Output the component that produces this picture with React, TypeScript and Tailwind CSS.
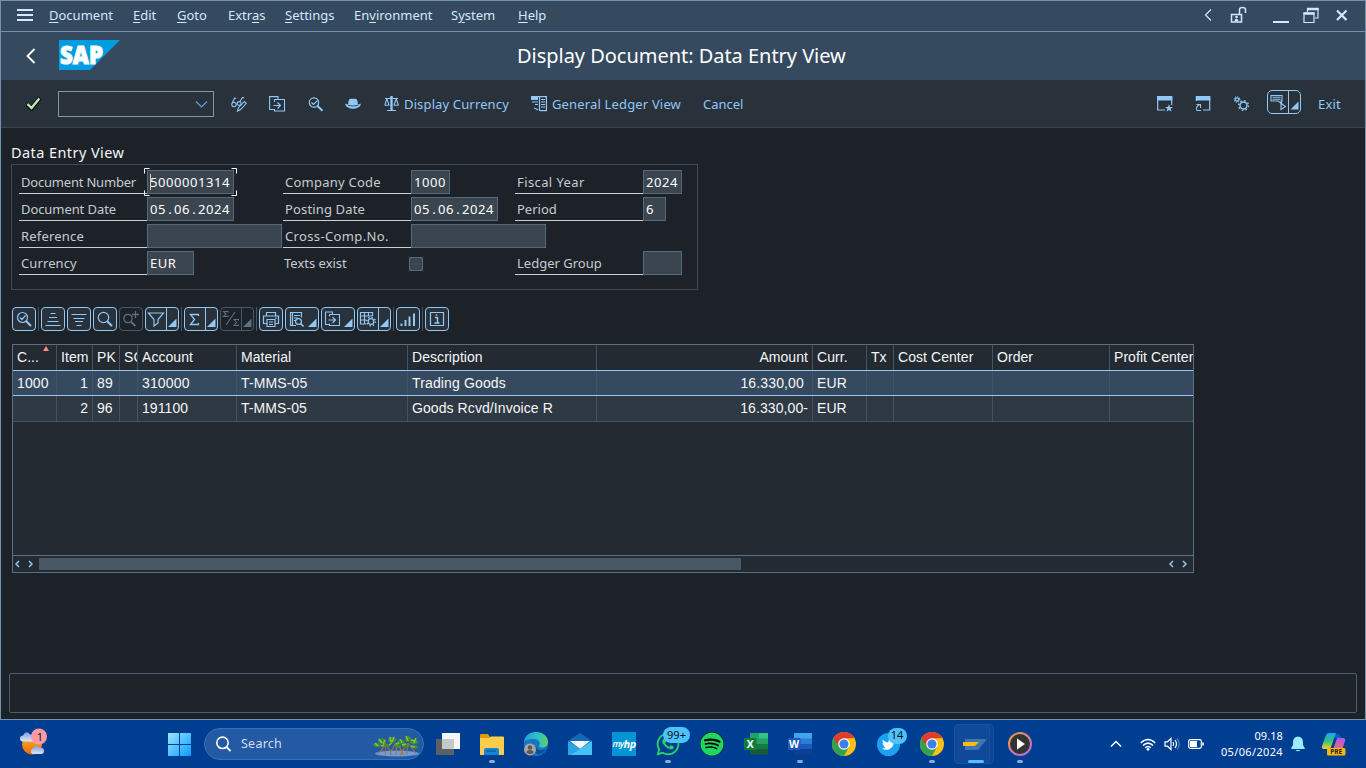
import React from 'react';
import { FaWhatsapp, FaSpotify, FaTwitter } from 'react-icons/fa';

type Kids = { children?: React.ReactNode };

function Ic({ w = 18, h = 18, className = '', children }: Kids & { w?: number; h?: number; className?: string }) {
  return (
    <svg width={w} height={h} viewBox={`0 0 ${w} ${h}`} className={`block shrink-0 ${className}`} fill="none" stroke="currentColor" strokeWidth="1.2">
      {children}
    </svg>
  );
}

/* ---------- menu bar ---------- */
function MenuItem({ pre = '', u, post, w }: { pre?: string; u: string; post: string; w: string }) {
  return (
    <span className={`${w} shrink-0 whitespace-nowrap`}>
      {pre}
      <u className="underline-offset-2">{u}</u>
      {post}
    </span>
  );
}

function MenuBar() {
  return (
    <div className="flex h-[31px] items-center border-b border-[#7292b3] bg-[#354a5f] pb-[2px] text-[13px] leading-[18px] text-[#d1e8ff]">
      <Ic w={16} h={14} className="ml-4 mr-4">
        <path d="M0 2h16M0 7h16M0 12h16" strokeWidth="2" />
      </Ic>
      <MenuItem u="D" post="ocument" w="w-[84px]" />
      <MenuItem u="E" post="dit" w="w-[44px]" />
      <MenuItem u="G" post="oto" w="w-[51px]" />
      <MenuItem pre="Extr" u="a" post="s" w="w-[57px]" />
      <MenuItem u="S" post="ettings" w="w-[69px]" />
      <MenuItem pre="En" u="v" post="ironment" w="w-[97px]" />
      <MenuItem pre="S" u="y" post="stem" w="w-[67px]" />
      <MenuItem u="H" post="elp" w="w-[60px]" />
      <div className="ml-auto flex items-center pr-[17px]">
        <Ic w={8} h={14} className="mr-[18px]">
          <path d="M7 1.500L1.500 7L7 12.500" />
        </Ic>
        <Ic w={17} h={18} className="mr-[26px]">
          <path d="M1.500 8.500h10v7.500H1.500zM9.500 8V3.500q0-2 3-2t3 2V7" strokeWidth="1.500" />
          <circle cx="6.500" cy="11" r="1.300" fill="currentColor" stroke="none" />
          <path d="M4.500 15.200q0-2.500 2-2.500t2 2.500z" fill="currentColor" stroke="none" />
        </Ic>
        <Ic w={16} h={16} className="mr-[14px]">
          <path d="M0 15h16" strokeWidth="2" />
        </Ic>
        <Ic w={16} h={17} className="mr-[17px]">
          <path d="M1 6h10v9.500H1zM4.500 5V1.500h10.500V11H12" />
          <path d="M.5 6.500h11M4 2h11.500" strokeWidth="2.600" />
        </Ic>
        <Ic w={12} h={14}>
          <path d="M1 2.500l9.500 9.500M10.500 2.500l-9.500 9.500" strokeWidth="2.200" />
        </Ic>
      </div>
    </div>
  );
}

function TitleBar() {
  return (
    <div className="flex h-12 items-center bg-[#354a5f]">
      <Ic w={10} h={16} className="ml-[25px] mr-[23px] text-white">
        <path d="M8.500 1L1.500 8L8.500 15" strokeWidth="1.800" />
      </Ic>
      <svg width="61" height="30" viewBox="0 0 61 30" className="-mt-[2px] block shrink-0 overflow-visible">
        <path d="M0 0h61L31 30H0z" fill="#009de0" />
        <text x="1" y="23.500" fontFamily="Open Sans" fontWeight="800" fontSize="25" fill="#fff" stroke="#fff" strokeWidth="1" textLength="43" lengthAdjust="spacingAndGlyphs">SAP</text>
      </svg>
      <h1 className="ml-[397px] whitespace-nowrap text-[20px] leading-7 tracking-[-0.03px] text-white">Display Document: Data Entry View</h1>
    </div>
  );
}

function ToolLabel({ children, w }: Kids & { w: string }) {
  return <span className={`${w} shrink-0 whitespace-nowrap`}>{children}</span>;
}

function MainToolbar() {
  return (
    <div className="flex h-12 items-center border-b border-[#3a4552] bg-[#29313a] text-[13px] leading-[18px] text-[#91c8f6]">
      <svg width="16" height="14" viewBox="0 0 16 14" className="ml-[25px] mr-4 block shrink-0" fill="none">
        <path d="M.8 7L5.500 11.500L14 1" stroke="#111" strokeWidth="4.400" />
        <path d="M1.500 7L5.500 11L13.300 1.500" stroke="#b6efae" strokeWidth="2.400" />
      </svg>
      <div className="mr-[17px] flex h-[26px] w-[156px] items-center justify-end border border-[#8396a8] pr-[5px]">
        <Ic w={13} h={8} className="text-[#5f9ee0]">
          <path d="M1 1.500l5.500 5.500L12 1.500" />
        </Ic>
      </div>
      <Ic w={17} h={16} className="mr-[21px]">
        <circle cx="3" cy="8.500" r="2.200" strokeWidth="1.100" />
        <circle cx="8.200" cy="7.500" r="1.900" strokeWidth="1.100" />
        <path d="M1.200 7L3.500 2l1.700.3M9 5.500l2.500-4 1.800.5" strokeWidth="1.100" />
        <path d="M6.500 15l.8-3 6-6.500 2 1.800-6 6.500z" strokeWidth="1.100" />
      </Ic>
      <Ic w={17} h={16} className="mr-[22px]">
        <path d="M5.500 13.500H.6V.6h8.400v2.400M5.500 6V3.500h10V15h-10v-2M4.500 9.500h7M8.500 6.500l3 3-3 3" strokeWidth="1.100" />
      </Ic>
      <Ic w={16} h={16} className="mr-[21px]">
        <circle cx="6" cy="6.500" r="4.700" />
        <path d="M3.500 6.500l2 2 4-4" />
        <path d="M9.500 10l5 4.800" strokeWidth="2" />
      </Ic>
      <Ic w={16} h={12} className="mr-[23px]">
        <path d="M3.200 6.500Q3 .8 6 .8h4q3 0 2.800 5.700 2.200 0 2.900-1 .3 2.500-2.700 4-5 2.500-10 0-3-1.500-2.700-4 .7 1 2.900 1z" fill="currentColor" stroke="none" />
        <path d="M3 7.300q5 1.500 10 0" stroke="#29313a" strokeWidth=".8" />
      </Ic>
      <Ic w={16} h={17} className="mr-[4px]">
        <path d="M1 3.500h5.500L7.500 2l1 1.500H14M3 15.500h9M2.800 4L.8 10M2.800 4l2.200 6M12.200 4l-2.200 6M12.200 4l2.200 6M.5 10.200h5M9.700 10.200h5" strokeWidth="1.100" />
        <path d="M7.500 1v14.500" strokeWidth="2.400" />
      </Ic>
      <span className="w-[127px] shrink-0 whitespace-nowrap tracking-[0.14px]">Display Currency</span>
      <Ic w={17} h={16} className="mr-[4px]">
        <path d="M0 0h7v4H0z" fill="currentColor" stroke="none" />
        <path d="M7 .6h8.400v14H9M8.500 0v15" />
        <path d="M10 3.500h4M10 6h4M10 8.500h4M10 11h4M1 6h6M4 8.500h3M3 12q2 .5 4 2" strokeWidth="1.100" />
      </Ic>
      <span className="w-[151px] shrink-0 whitespace-nowrap tracking-[0.16px]">General Ledger View</span>
      <ToolLabel w="w-[60px]">Cancel</ToolLabel>
      <div className="ml-auto flex items-center">
        <Ic w={16} h={16} className="mr-[22px]">
          <path d="M8 14H.7V2h14v7" />
          <path d="M0 0h15.400v4.500H0z" fill="currentColor" stroke="none" />
          <path d="M12 8l1 3h3l-2.400 1.800 1 3L12 14l-2.600 1.800 1-3L8 11h3z" fill="currentColor" stroke="none" />
        </Ic>
        <Ic w={16} h={16} className="mr-[22px]">
          <path d="M1.500 5V1M8 14h6.700V2" />
          <path d="M.8 0h14.600v4.500H.8z" fill="currentColor" stroke="none" />
          <path d="M6 14.500H2q-2-4 3-6M1.500 8.500h4V12" strokeWidth="1.100" />
        </Ic>
        <Ic w={17} h={16} className="mr-[17px]">
          <circle cx="4" cy="3.500" r="1.700" strokeWidth="1.200" />
          <circle cx="4" cy="3.500" r="2.800" strokeWidth="1.100" strokeDasharray="1 1.199" />
          <circle cx="10.500" cy="9.500" r="3.500" strokeWidth="1.400" />
          <circle cx="10.500" cy="9.500" r="4.900" strokeWidth="1.500" strokeDasharray="1.600 2.248" />
        </Ic>
        <div className="mr-[17px] mt-[-4px] flex h-6 w-[34px] rounded-[5px] border border-[#91c8f6]">
          <div className="flex w-[21px] items-center justify-center border-r border-[#91c8f6]">
            <Ic w={18} h={18}>
              <path d="M2 2.500h11v5.500H12l.8 3-3.500-3H2z" strokeWidth="1.100" />
              <path d="M3.500 4.300h8M3.500 6.200h8M12 10.500v6l4.500-3z" strokeWidth="1.100" />
            </Ic>
          </div>
          <Ic w={11} h={22}>
            <path d="M9.500 10.500v8H1.500z" fill="currentColor" stroke="none" />
          </Ic>
        </div>
        <span className="w-[47px] tracking-[0.15px]">Exit</span>
      </div>
    </div>
  );
}

/* ---------- document header form ---------- */
function Value({ text }: { text: string }) {
  return (
    <>
      {text.split('.').map((p, i) => (
        <React.Fragment key={i}>
          {i > 0 && <span className="inline-block w-2 text-center tracking-normal">.</span>}
          {p}
        </React.Fragment>
      ))}
    </>
  );
}

function Field({ label, value = '', w, track = '', focus = false }: { label: string; value?: string; w: string; track?: string; focus?: boolean }) {
  return (
    <div className="flex h-6 shrink-0">
      <div className={`w-32 shrink-0 whitespace-nowrap border-b border-[#c9ced3] pl-[2px] pt-[3px] leading-[18px] text-[#c5cbd1] ${track}`}>{label}</div>
      <div className={`${w} relative h-6 shrink-0 whitespace-nowrap border border-[#55687c] bg-[#3a4550] pl-[2px] pt-[2px] leading-[18px] tracking-[0.56px] text-white`}>
        <Value text={value} />
        {focus && (
          <>
            <svg width="94" height="28" className="absolute -left-1 -top-[3px]" fill="none" stroke="#fff">
              <path d="M.5 5.500v-5h5M87.500.5h5v5M.5 22.500v5h5M87.500 27.500h5v-5" />
            </svg>
            <span className="absolute left-[2px] top-[3px] h-4 w-px bg-[#e8c9ae]" />
          </>
        )}
      </div>
    </div>
  );
}

function DocumentForm() {
  return (
    <section className="ml-[10px] mt-[14px]">
      <h2 className="h-[22px] text-[14.500px] leading-[20px] tracking-[0.42px] text-[#f5f6f7]">Data Entry View</h2>
      <div className="flex h-[126px] w-[687px] border border-[#3d4a5a] pl-[7px] pt-[5px] text-[13px]">
        <div className="flex w-[264px] shrink-0 flex-col gap-[3px]">
          <Field label="Document Number" value="5000001314" w="w-[87px]" track="tracking-[-0.2px]" focus />
          <Field label="Document Date" value="05.06.2024" w="w-[87px]" track="tracking-[-0.08px]" />
          <Field label="Reference" w="w-[135px]" track="tracking-[0.2px]" />
          <Field label="Currency" value="EUR" w="w-[47px]" track="tracking-[0.1px]" />
        </div>
        <div className="flex w-[232px] shrink-0 flex-col gap-[3px]">
          <Field label="Company Code" value="1000" w="w-[39px]" track="tracking-[0.24px]" />
          <Field label="Posting Date" value="05.06.2024" w="w-[87px]" track="tracking-[0.15px]" />
          <Field label="Cross-Comp.No." w="w-[135px]" track="tracking-[0.36px]" />
          <div className="flex h-6 items-center pt-px">
            <span className="w-[126px] shrink-0 pb-px pl-px leading-[18px] text-[#c5cbd1]">Texts exist</span>
            <span className="size-[14px] border border-[#55687c] bg-[#3a4550]" />
          </div>
        </div>
        <div className="flex flex-col gap-[3px]">
          <Field label="Fiscal Year" value="2024" w="w-[39px]" track="tracking-[0.4px]" />
          <Field label="Period" value="6" w="w-[23px]" />
          <div className="h-6" />
          <Field label="Ledger Group" w="w-[39px]" />
        </div>
      </div>
    </section>
  );
}

/* ---------- list toolbar ---------- */
function Btn({ children, drop = false, line = false, off = false }: Kids & { drop?: boolean; line?: boolean; off?: boolean }) {
  return (
    <div className={`mr-[2px] flex h-6 shrink-0 rounded-[4px] border ${drop ? 'w-[34px]' : 'w-6'} ${off ? 'border-[#47596b] text-[#5b7085]' : 'border-[#91c8f6] bg-[#29313a] text-[#91c8f6]'}`}>
      <div className={`flex shrink-0 items-center justify-center ${drop ? 'w-[21px]' : 'w-[22px]'} ${line ? (off ? 'border-r border-[#47596b]' : 'border-r border-[#91c8f6]') : ''}`}>{children}</div>
      {drop && (
        <Ic w={10} h={22}>
          <path d="M9.500 10.500v8.500H1z" fill="currentColor" stroke="none" />
        </Ic>
      )}
    </div>
  );
}

function Sep() {
  return <div className="mr-[2px] h-6 w-px bg-[#465564]" />;
}

function ListToolbar() {
  return (
    <div className="ml-[11px] mt-[17px] flex h-6">
      <Btn>
        <Ic>
          <circle cx="7.500" cy="7.500" r="5" />
          <path d="M5 7.500l2 2 3.500-4" />
          <path d="M11 11l5 5" strokeWidth="2" />
        </Ic>
      </Btn>
      <Sep />
      <Btn>
        <Ic>
          <path d="M6.500 3.500h5M5 7.500h8M3.500 11.500h11M1.500 15.500h15" />
        </Ic>
      </Btn>
      <Btn>
        <Ic>
          <path d="M1.500 4.500h15M3.500 8.500h11M5 11.500h8M6.500 15.500h5" />
        </Ic>
      </Btn>
      <Btn>
        <Ic>
          <circle cx="7.500" cy="7.500" r="5.200" />
          <path d="M11 11l5 5" strokeWidth="2" />
        </Ic>
      </Btn>
      <Btn off>
        <Ic>
          <circle cx="6" cy="8.500" r="4.200" />
          <path d="M9 12l4.500 4" strokeWidth="1.800" />
          <path d="M10 4.500h7M13.500 1v7" strokeWidth="1.300" />
        </Ic>
      </Btn>
      <Btn drop line>
        <Ic>
          <path d="M1.500 3h15L11 9.500V13l-4 3V9.500z" />
        </Ic>
      </Btn>
      <Sep />
      <Btn drop line>
        <Ic>
          <path d="M12.500 6V4.500h-8L8.500 9.500l-4 5h8V13" strokeWidth="1.300" />
        </Ic>
      </Btn>
      <Btn drop line off>
        <Ic>
          <path d="M6 2.500V1.500H1.500L4 4 1.500 6.500H6v-1M4 15L13 2M16.500 10.500v-1H12l2.500 3L12 15.500h4.500v-1" strokeWidth="1.100" />
        </Ic>
      </Btn>
      <Sep />
      <Btn>
        <Ic>
          <path d="M4.500 6V2.500h9V6M5 13.500H1.500V6h15v7.500h-3M5 9.500h8v7H5zM7 12h4M7 14.500h4M13 8h2" />
        </Ic>
      </Btn>
      <Btn drop>
        <Ic>
          <path d="M8 15.500H2.500V2.500h11v5M4.500 2v13M6 5.500h6M6 8h4M6 10.500h2" />
          <circle cx="10.500" cy="11.500" r="2.900" />
          <path d="M12.500 13.500l3 3" strokeWidth="1.700" />
        </Ic>
      </Btn>
      <Btn drop>
        <Ic>
          <path d="M5.500 14.500H1.500V2h7v2.500M5.500 6.500v-2h10v11h-10v-2M4.500 10h7M8.500 7l3 3-3 3" strokeWidth="1.100" />
        </Ic>
      </Btn>
      <Btn drop line>
        <Ic>
          <path d="M7 14H1.500V2.500h12V6M1 6h12M1 10h6M5.500 2v12M9.500 2v4" />
          <circle cx="12" cy="11.500" r="2.800" />
          <circle cx="12" cy="11.500" r="4.300" strokeWidth="1.500" strokeDasharray="1.400 1.977" />
        </Ic>
      </Btn>
      <Sep />
      <Btn>
        <Ic>
          <path d="M2.500 13.500V16M6.500 10v6M10.500 6.500V16M15 3.500V16" strokeWidth="2" />
        </Ic>
      </Btn>
      <Sep />
      <Btn>
        <Ic>
          <path d="M2.500 2.500h13v13h-13z" />
          <path d="M7 7.500h2.500v5M6.500 13h5M8.500 4.200v1.600" strokeWidth="1.500" />
        </Ic>
      </Btn>
    </div>
  );
}

/* ---------- line item table ---------- */
type Col = { h: string; w: string; right?: boolean };
const cols: Col[] = [
  { h: 'C...', w: 'w-[44px]' },
  { h: 'Item', w: 'w-[36px]', right: true },
  { h: 'PK', w: 'w-[27px]' },
  { h: 'SG', w: 'w-[18px]' },
  { h: 'Account', w: 'w-[99px]' },
  { h: 'Material', w: 'w-[171px]' },
  { h: 'Description', w: 'w-[189px]' },
  { h: 'Amount', w: 'w-[216px]', right: true },
  { h: 'Curr.', w: 'w-[54px]' },
  { h: 'Tx', w: 'w-[27px]' },
  { h: 'Cost Center', w: 'w-[99px]' },
  { h: 'Order', w: 'w-[117px]' },
  { h: 'Profit Center', w: 'w-[83px]' },
];
const rows = [
  ['1000', '1', '89', '', '310000', 'T-MMS-05', 'Trading Goods', '16.330,00\u00a0', 'EUR', '', '', '', ''],
  ['', '2', '96', '', '191100', 'T-MMS-05', 'Goods Rcvd/Invoice R', '16.330,00-', 'EUR', '', '', '', ''],
];

function Cells({ values }: { values: string[] }) {
  return (
    <>
      {cols.map((c, i) => (
        <div
          key={c.h}
          className={`${c.w} relative shrink-0 overflow-hidden whitespace-nowrap pl-1 ${i < 12 ? 'border-r border-[#45525f]' : ''} ${c.right ? 'pr-1 text-right' : ''}`}
        >
          {values[i]}
        </div>
      ))}
    </>
  );
}

function Chevron({ right = false }: { right?: boolean }) {
  return (
    <Ic w={5} h={8} className="text-[#91c8f6]">
      <path d={right ? 'M1 1l3 3-3 3' : 'M4 1L1 4l3 3'} strokeWidth="1.500" />
    </Ic>
  );
}

function ItemTable() {
  return (
    <div className="ml-[11px] mt-[13px] h-[229px] w-[1182px] border border-[#5b7083] bg-[#232a31] font-['Liberation_Sans',sans-serif] text-[14px] text-[#f5f6f7]">
      <div className="relative flex h-[25px] leading-[24px] tracking-[0.06px]">
        <Cells values={cols.map((c) => c.h)} />
        <svg width="6" height="5" className="absolute left-[30px] top-[1px]">
          <path d="M0 5L3 0l3 5z" fill="#ff8888" />
        </svg>
      </div>
      <div className="flex h-[26px] border-y border-[#91c8f6] bg-[#354a5f] leading-[25px] tracking-[0.14px]">
        <Cells values={rows[0]} />
      </div>
      <div className="flex h-[26px] border-b border-[#45525f] bg-[#2f3943] leading-[25px] tracking-[0.08px]">
        <Cells values={rows[1]} />
      </div>
      <div className="h-[133px]" />
      <div className="flex h-[17px] items-center border-t border-[#5b7083] pl-[2px] pr-[6px]">
        <Chevron />
        <div className="w-2" />
        <Chevron right />
        <div className="ml-[6px] h-3 w-[702px] bg-[#4a5866]" />
        <div className="ml-auto flex gap-2">
          <Chevron />
          <Chevron right />
        </div>
      </div>
    </div>
  );
}

/* ---------- Windows taskbar ---------- */
function Task({ children, dot = false, active = false }: Kids & { dot?: boolean; active?: boolean }) {
  return (
    <div className="relative flex h-12 w-11 shrink-0 items-center justify-center">
      {active && (
        <>
          <div className="absolute left-[4px] top-[4px] h-10 w-[36px] rounded-[4px] border border-[#1b5098] bg-[#0c4595]" />
          <div className="absolute left-0 top-[4px] h-10 w-[36px] rounded-[4px] border border-[#1b5098] bg-[#11499a]" />
        </>
      )}
      <div className={`relative ${active ? '-left-px' : ''}`}>{children}</div>
      {dot && <div className="absolute bottom-[5px] left-[19px] h-[3px] w-[6px] rounded-full bg-[#8ba9d3]" />}
      {active && <div className="absolute bottom-[5px] left-[14px] h-[3px] w-4 rounded-full bg-[#4cc2ff]" />}
    </div>
  );
}

function Chrome() {
  return (
    <svg width="24" height="24" viewBox="0 0 24 24" className="block">
      <circle cx="12" cy="12" r="12" fill="#fbc116" />
      <path d="M12 12L1.600 6A12 12 0 0 0 12 24l5-9z" fill="#31a350" />
      <path d="M1.600 6A12 12 0 0 1 22.400 6L12 6.500 7 15z" fill="#e33b2e" />
      <circle cx="12" cy="12" r="5.800" fill="#fff" />
      <circle cx="12" cy="12" r="4.600" fill="#3f7fec" />
    </svg>
  );
}

function Office({ letter, a, b, c, d }: { letter: string; a: string; b: string; c: string; d: string }) {
  return (
    <svg width="24" height="22" viewBox="0 0 24 22" className="block">
      <rect x="6" y="0" width="18" height="6" fill={a} />
      <rect x="6" y="5.500" width="18" height="6" fill={b} />
      <rect x="6" y="11" width="18" height="5.500" fill={c} />
      <rect x="6" y="16" width="18" height="5.500" fill={d} />
      {letter === 'X' && <path d="M15 0h9v5.500h-9z" fill="#33c481" />}
      <rect x="0" y="5" width="12.500" height="12" rx="1" fill={letter === 'X' ? '#107c41' : '#185abd'} />
      <text x="6.200" y="14.700" textAnchor="middle" fontFamily="Open Sans" fontWeight="700" fontSize="10.500" fill="#fff">{letter}</text>
    </svg>
  );
}

function Mangrove() {
  return (
    <svg width="48" height="24" viewBox="0 0 48 24" className="mt-[5px] block">
      <ellipse cx="25" cy="18.500" rx="22" ry="3" fill="#6d9ed8" />
      <path d="M12 8q0 7-7 11M12 8q3 7 1 12M13 8q5 7 7 12M24 8q-5 7-6 12M24 8q1 7 0 12M24 8q6 6 7 12M36 8q-5 7-8 12M36 8q-1 7-1 12M36 8q5 6 8 11" stroke="#b56f3c" strokeWidth="1.100" fill="none" />
      <g fill="#3f8f35">
        <ellipse cx="5" cy="10" rx="4" ry="2" />
        <ellipse cx="10" cy="6" rx="4" ry="2.500" />
        <ellipse cx="20" cy="5" rx="4" ry="3" />
        <ellipse cx="29" cy="7" rx="4" ry="2.500" />
        <ellipse cx="36" cy="4" rx="3" ry="3" />
        <ellipse cx="42" cy="7" rx="4" ry="2.500" />
        <ellipse cx="15" cy="10.500" rx="3" ry="1.800" />
        <ellipse cx="26" cy="11" rx="3" ry="1.800" />
        <ellipse cx="34" cy="11" rx="4" ry="1.800" />
        <ellipse cx="43" cy="12" rx="3" ry="1.500" />
      </g>
      <path d="M7 4l3 4M18 2l1 5M22 2l-2 5M28 4l2 4M34 1l2 5M39 5l4 1M44 3l-2 5M3 8l3 3M13 5l-2 4M30 10l4-1M24 9l3-1M9 11l3-1M43 12l-4-1M17 10l3-2" stroke="#86c440" strokeWidth="1.400" />
    </svg>
  );
}

function Taskbar() {
  return (
    <div className="flex h-12 items-center bg-[#003e92] font-['Noto_Sans',sans-serif] text-white">
      <svg width="30" height="30" viewBox="0 0 30 30" className="ml-[18px] mt-[-5px] block shrink-0">
        <defs>
          <linearGradient id="sun" x2="0" y2="1">
            <stop stopColor="#fcb827" />
            <stop offset="1" stopColor="#ef6a12" />
          </linearGradient>
          <linearGradient id="cloud" x2="0" y2="1">
            <stop stopColor="#7e9fe0" />
            <stop offset="1" stopColor="#dce6fb" />
          </linearGradient>
        </defs>
        <circle cx="14" cy="17.500" r="10" fill="url(#sun)" />
        <path d="M5 14.500a3 3 0 0 1 0-6q3-6 7-1 4 0 4 7z" fill="url(#cloud)" />
        <path d="M14.500 27a3 3 0 0 1 .5-5.500q3-5 6.500-.7 4.500-.5 4.500 3.200 0 3-3 3z" fill="url(#cloud)" />
        <circle cx="21" cy="9.500" r="8" fill="#ff99a4" />
        <text x="22" y="13.500" textAnchor="middle" fontFamily="Noto Sans" fontSize="11" fill="#111">1</text>
      </svg>
      <svg width="23" height="23" viewBox="0 0 23 23" className="ml-[120px] block shrink-0">
        <defs>
          <linearGradient id="win" x2="1" y2="1">
            <stop stopColor="#9ae6ff" />
            <stop offset="1" stopColor="#0a9cff" />
          </linearGradient>
        </defs>
        <path d="M0 0h11v11H0zM12 0h11v11H12zM0 12h11v11H0zM12 12h11v11H12z" fill="url(#win)" />
      </svg>
      <div className="ml-[13px] flex h-8 w-[220px] shrink-0 items-center rounded-full border border-[#3f6db2] bg-[#2459a3] pl-[11px] pr-[3px]">
        <Ic w={15} h={16}>
          <circle cx="6.500" cy="6.800" r="5.700" strokeWidth="1.600" />
          <path d="M10.500 11l4 4" strokeWidth="1.800" />
        </Ic>
        <span className="ml-[10px] mt-px text-[12.500px] tracking-[0.25px] text-[#d3def0]">Search</span>
        <div className="ml-auto">
          <Mangrove />
        </div>
      </div>
      <div className="ml-[2px] flex">
        <Task>
          <svg width="24" height="22" viewBox="0 0 24 22" className="block">
            <path d="M0 6h18v16H0z" fill="#5c5f63" />
            <path d="M6 0h18v16H6z" fill="#f4f5f6" />
            <path d="M6 6h12v10H6z" fill="#c6c8ca" />
          </svg>
        </Task>
        <Task dot>
          <svg width="24" height="23" viewBox="0 0 24 23" className="block">
            <path d="M0 2q0-1 1-1h7l2 3h14v18H0z" fill="#dd9b09" />
            <path d="M0 5h9l2-1.500h12q1 0 1 1V22H0z" fill="#ffcc4c" />
            <path d="M4 22v-5q0-2 2-2h11q2 0 2 2v5z" fill="#1683d8" />
            <path d="M7 18h9" stroke="#0b5ca4" strokeWidth="1.500" />
          </svg>
        </Task>
        <Task>
          <svg width="25" height="24" viewBox="0 0 25 24" className="block">
            <defs>
              <linearGradient id="edge" x2="1">
                <stop stopColor="#209ee0" />
                <stop offset=".6" stopColor="#2bc3c4" />
                <stop offset="1" stopColor="#62d35c" />
              </linearGradient>
            </defs>
            <circle cx="12" cy="12" r="12" fill="#1674c4" />
            <path d="M0 11C0-4 24-3 24 10c0 6-8 7-9 4 2-3 0-7-5-7C5 7 1 8 0 11z" fill="url(#edge)" />
            <path d="M22 17q-8 3-10-2l-3 1q2 7 7 6 4-1 6-5z" fill="#0a4f9c" />
            <circle cx="6" cy="17.500" r="6" fill="#a9a6a2" />
            <circle cx="6" cy="15.500" r="2.200" fill="#5b5754" />
            <path d="M2.500 21q0-3 3.500-3t3.500 3q-3 2-7 0z" fill="#5b5754" />
          </svg>
        </Task>
        <Task>
          <svg width="24" height="22" viewBox="0 0 24 22" className="block">
            <path d="M0 8L12 0l12 8v14H0z" fill="#1269b8" />
            <path d="M2 8h20l-10 8z" fill="#f4f6f8" />
            <path d="M0 8l14 9-8 5H0z" fill="#2aa4e4" />
            <path d="M24 8L3 22h21z" fill="#46c3f5" />
          </svg>
        </Task>
        <Task>
          <div className="flex size-6 items-center justify-center bg-[#0096d6] font-['Open_Sans',sans-serif] text-[9px] font-semibold italic tracking-[-0.6px]">
            my<span className="text-[11px] font-bold">hp</span>
          </div>
        </Task>
        <Task dot>
          <FaWhatsapp className="size-[26px] text-[#23d366]" />
          <span className="absolute -top-[4px] left-[8px] flex h-4 w-[27px] items-center justify-center rounded-full bg-[#4cc2ff] text-[11px] text-[#111]">99+</span>
        </Task>
        <Task>
          <div className="rounded-full bg-black">
            <FaSpotify className="size-6 text-[#1ed760]" />
          </div>
        </Task>
        <Task>
          <Office letter="X" a="#21a366" b="#21a366" c="#107c41" d="#185c37" />
        </Task>
        <Task dot>
          <Office letter="W" a="#41a5ee" b="#2b7cd3" c="#185abd" d="#103f91" />
        </Task>
        <Task>
          <Chrome />
        </Task>
        <Task>
          <div className="flex size-[23px] items-center justify-center rounded-full bg-[#1da1f2]">
            <FaTwitter className="size-[13px] text-white" />
          </div>
          <span className="absolute -top-[5px] left-[11px] flex h-4 w-[19px] items-center justify-center rounded-full bg-[#4cc2ff] text-[11px] text-[#111]">14</span>
        </Task>
        <Task dot>
          <Chrome />
        </Task>
        <Task active>
          <svg width="24" height="12" viewBox="0 0 24 12" className="block">
            <path d="M2 1h22l-9 11H2z" fill="#3d77ad" />
            <path d="M0 4h16l-4 4H0z" fill="#fdb813" />
          </svg>
        </Task>
        <Task dot>
          <svg width="24" height="24" viewBox="0 0 24 24" className="block">
            <defs>
              <linearGradient id="ring" x2=".6" y2="1">
                <stop stopColor="#f79c3c" />
                <stop offset="1" stopColor="#b86fd0" />
              </linearGradient>
            </defs>
            <circle cx="12" cy="12" r="11" fill="#333" stroke="url(#ring)" strokeWidth="2" />
            <path d="M9 6.500l8 5.500-8 5.500z" fill="#fff" />
          </svg>
        </Task>
      </div>
      <div className="ml-auto flex items-center">
        <Ic w={12} h={8} className="mr-[18px]">
          <path d="M1 6.500l5-5 5 5" strokeWidth="1.500" />
        </Ic>
        <Ic w={16} h={13} className="mr-[8px]">
          <path d="M.8 5q7.200-7 14.400 0M3 7.500q5-4.800 10 0M5.200 9.800q2.800-2.600 5.600 0" strokeWidth="1.500" />
          <circle cx="8" cy="11.300" r="1.400" fill="currentColor" stroke="none" />
        </Ic>
        <Ic w={16} h={14} className="mr-[8px]">
          <path d="M1 4.800h2.500L7 1.500v11L3.500 9.200H1zM9 5q1.500 2 0 4M11 3q3 4 0 8" />
          <path d="M13 1.500q4.500 5.500 0 11" stroke="#5b83bc" />
        </Ic>
        <Ic w={16} h={12} className="mr-[15px]">
          <rect x=".7" y="1.700" width="12.600" height="8.600" rx="1.500" />
          <rect x="2" y="3" width="7" height="6" fill="currentColor" stroke="none" />
          <path d="M15 4.500v3" strokeWidth="1.600" />
        </Ic>
        <div className="w-[64px] whitespace-nowrap text-right text-[11px] leading-[16px] tracking-[0.36px]">
          <div className="tracking-[0.1px]">09.18</div>
          <div>05/06/2024</div>
        </div>
        <Ic w={14} h={16} className="ml-[8px] text-[#98ecfe]">
          <path d="M2 6a5 5.500 0 0 1 10 0v3l1.700 3v1H.3v-1L2 9zM4.500 14h5q-2.500 2.500-5 0z" fill="currentColor" stroke="none" />
        </Ic>
        <svg width="24" height="24" viewBox="0 0 24 24" className="ml-[17px] mr-5 block shrink-0">
          <defs>
            <linearGradient id="cpa" x2="0" y2="1">
              <stop stopColor="#12a8ed" />
              <stop offset=".5" stopColor="#37bf86" />
              <stop offset="1" stopColor="#f6d21d" />
            </linearGradient>
            <linearGradient id="cpb" x2="0" y2="1">
              <stop stopColor="#a857ef" />
              <stop offset="1" stopColor="#fb6c69" />
            </linearGradient>
          </defs>
          <path d="M11 2h5q2 0 3 4h-6z" fill="#1759c5" />
          <path d="M7 1h7L9 15q-1 2-3 2H2q-3 0-2-3L4 3q1-2 3-2z" fill="url(#cpa)" />
          <path d="M15 6h6q3 0 2 3l-3 9h-9z" fill="url(#cpb)" />
          <rect x="5" y="16" width="18.500" height="7.500" rx="1.500" fill="#ffb900" />
          <text x="14.200" y="22" textAnchor="middle" fontFamily="Open Sans" fontWeight="700" fontSize="6.500" fill="#222">PRE</text>
        </svg>
      </div>
    </div>
  );
}

export default function App() {
  return (
    <div className="flex h-[768px] w-[1366px] flex-col overflow-hidden font-['Noto_Sans',sans-serif]">
      <div className="flex h-[720px] flex-col border border-[#7292b3] bg-[#1d2228]">
        <MenuBar />
        <TitleBar />
        <MainToolbar />
        <DocumentForm />
        <ListToolbar />
        <ItemTable />
        <div className="ml-2 mr-2 mt-[100px] h-10 rounded-[2px] border border-[#475e75] bg-[#1e242a]" />
      </div>
      <Taskbar />
    </div>
  );
}
